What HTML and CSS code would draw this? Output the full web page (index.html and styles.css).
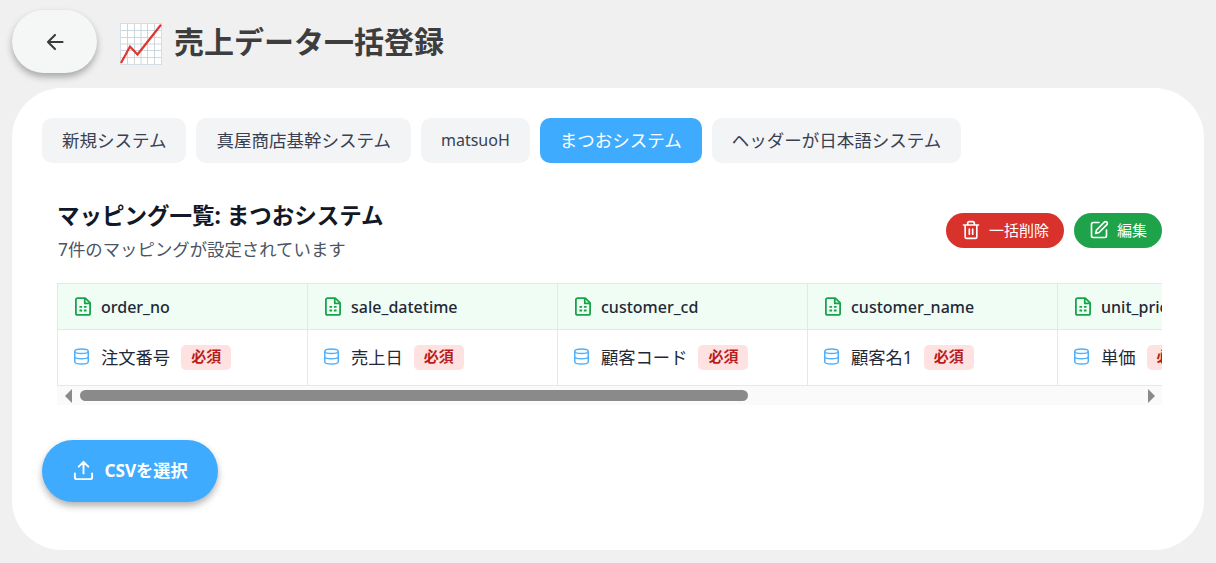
FILE: index.html
```html
<!DOCTYPE html>
<html lang="ja">
<head>
<meta charset="utf-8">
<title>売上データ一括登録</title>
<link rel="stylesheet" href="styles.css">
</head>
<body>
<svg class="defs" width="0" height="0" aria-hidden="true">
  <symbol id="i-file" viewBox="3 1.500 18 21"><path d="M14.500 2.500H6a2 2 0 0 0-2 2v15a2 2 0 0 0 2 2h12a2 2 0 0 0 2-2V8l-5.500-5.500Z" fill="none" stroke="currentColor" stroke-width="2" stroke-linejoin="round"/><path d="M14 3v5.500h6" fill="none" stroke="currentColor" stroke-width="2" stroke-linejoin="round"/><path d="M8 12.500h3M13 12.500h3M8 16.500h3M13 16.500h3" fill="none" stroke="currentColor" stroke-width="2"/></symbol>
  <symbol id="i-db" viewBox="2 1 20 22"><ellipse cx="12" cy="5" rx="9" ry="3" fill="none" stroke="currentColor" stroke-width="2"/><path d="M3 5v14c0 1.660 4 3 9 3s9-1.340 9-3V5M3 12c0 1.660 4 3 9 3s9-1.340 9-3" fill="none" stroke="currentColor" stroke-width="2"/></symbol>
</svg>

<header class="top">
  <button class="back" type="button" aria-label="戻る">
    <svg width="26" height="26" viewBox="0 0 24 24" fill="none" stroke="#3a3a3a" stroke-width="1.900" stroke-linecap="round" stroke-linejoin="round"><path d="M19 12H5.500M12 5.500 5.500 12l6.500 6.500"/></svg>
  </button>
  <svg class="chart" width="42" height="42" viewBox="0 0 42 42">
    <rect x="0.500" y="0.500" width="41" height="41" fill="#fff" stroke="#d5dde5"/>
    <path d="M7.500 1v40M14.500 1v40M21 1v40M27.500 1v40M34.500 1v40M1 7.500h40M1 14.500h40M1 21h40M1 27.500h40M1 34.500h40" stroke="#ccd6dd" stroke-width="1" fill="none"/>
    <path d="M1 40 10 23.500l7.500 8L41 1.700" fill="none" stroke="#e0352f" stroke-width="2.200"/>
  </svg>
  <h1 class="page-title">売上データ一括登録</h1>
</header>

<main class="card">
  <nav class="tabs">
    <button class="tab" type="button">新規システム</button>
    <button class="tab" type="button">真屋商店基幹システム</button>
    <button class="tab tab-latin" type="button">matsuoH</button>
    <button class="tab tab-active" type="button">まつおシステム</button>
    <button class="tab" type="button">ヘッダーが日本語システム</button>
  </nav>

  <section class="mapping">
    <div class="mapping-head">
      <div>
        <h2 class="mapping-title">マッピング一覧: まつおシステム</h2>
        <p class="mapping-sub">7件のマッピングが設定されています</p>
      </div>
      <div class="actions">
        <button class="pill pill-red" type="button">
          <svg width="20" height="20" viewBox="0 0 24 24" fill="none" stroke="currentColor" stroke-width="2" stroke-linecap="round" stroke-linejoin="round"><path d="M3 6h18M19 6v14a2 2 0 0 1-2 2H7a2 2 0 0 1-2-2V6M8 6V4a2 2 0 0 1 2-2h4a2 2 0 0 1 2 2v2M10 11v6M14 11v6"/></svg>
          一括削除
        </button>
        <button class="pill pill-green" type="button">
          <svg width="20" height="20" viewBox="0 0 24 24" fill="none" stroke="currentColor" stroke-width="2" stroke-linecap="round" stroke-linejoin="round"><path d="M12 3H5a2 2 0 0 0-2 2v14a2 2 0 0 0 2 2h14a2 2 0 0 0 2-2v-7"/><path d="M18.400 2.600a2.120 2.120 0 0 1 3 3L12 15l-4 1 1-4 9.400-9.400Z"/></svg>
          編集
        </button>
      </div>
    </div>

    <div class="table-clip">
      <div class="table">
        <div class="col">
          <div class="cell-head"><svg class="ico-file"><use href="#i-file"/></svg>order_no</div>
          <div class="cell-body"><svg class="ico-db"><use href="#i-db"/></svg>注文番号<span class="req">必須</span></div>
        </div>
        <div class="col">
          <div class="cell-head"><svg class="ico-file"><use href="#i-file"/></svg>sale_datetime</div>
          <div class="cell-body"><svg class="ico-db"><use href="#i-db"/></svg>売上日<span class="req">必須</span></div>
        </div>
        <div class="col">
          <div class="cell-head"><svg class="ico-file"><use href="#i-file"/></svg>customer_cd</div>
          <div class="cell-body"><svg class="ico-db"><use href="#i-db"/></svg>顧客コード<span class="req">必須</span></div>
        </div>
        <div class="col">
          <div class="cell-head"><svg class="ico-file"><use href="#i-file"/></svg>customer_name</div>
          <div class="cell-body"><svg class="ico-db"><use href="#i-db"/></svg>顧客名1<span class="req">必須</span></div>
        </div>
        <div class="col">
          <div class="cell-head"><svg class="ico-file"><use href="#i-file"/></svg>unit_price</div>
          <div class="cell-body"><svg class="ico-db"><use href="#i-db"/></svg>単価<span class="req">必須</span></div>
        </div>
      </div>
      <div class="scrollbar">
        <span class="arrow arrow-left"></span>
        <span class="thumb"></span>
        <span class="arrow arrow-right"></span>
      </div>
    </div>
  </section>

  <button class="upload" type="button">
    <svg class="upload-icon" width="23" height="23" viewBox="0 0 24 24" fill="none" stroke="currentColor" stroke-width="2" stroke-linecap="round" stroke-linejoin="round"><path d="M21 15v4a2 2 0 0 1-2 2H5a2 2 0 0 1-2-2v-4M17 8l-5-5-5 5M12 3v12"/></svg>
    CSVを選択
  </button>
</main>
</body>
</html>
```

FILE: styles.css
```css
* { box-sizing: border-box; }
html, body { margin: 0; height: 100%; }
body {
  background: #f0f0f0;
  font-family: "Noto Sans", "Noto Sans CJK JP", sans-serif;
  color: #111827;
  overflow: hidden;
  padding: 10px 12px 0;
}
button { font-family: inherit; border: 0; cursor: pointer; }
.defs { display: block; height: 0; }

.top { display: flex; align-items: center; height: 63px; margin-bottom: 15px; }
.back {
  width: 85px; height: 63px; border-radius: 32px; background: #f5f6f6;
  display: flex; align-items: center; justify-content: center;
  box-shadow: 0 4px 7px rgba(0,0,0,.3);
}
.chart { margin: 4px 12px 0 23px; }
.page-title { margin: 0; font-size: 30px; font-weight: 700; color: #3d3d3d; line-height: 1; }

.card {
  width: 1192px; height: 462px; background: #fff; border-radius: 50px;
  padding: 30px;
}
.tabs { display: flex; gap: 10px; }
.tab {
  height: 45px; padding: 0 20px 2px; border-radius: 10px;
  background: #f3f4f6; color: #374151; font-size: 17.500px;
}
.tab-latin { font-size: 16px; }
.tab-active { background: #3eabff; color: #fff; }

.mapping { padding: 0 12px 0 15px; margin-top: 38px; }
.mapping-head { display: flex; justify-content: space-between; align-items: flex-start; }
.mapping-title { margin: 0; font-size: 22.500px; line-height: 30px; font-weight: 700; color: #111827; }
.mapping-sub { margin: 7px 0 0; padding-left: 1px; font-size: 17.400px; line-height: 23px; color: #4b5563; }
.actions { display: flex; gap: 10px; margin-top: 12px; }
.pill {
  height: 35px; padding: 0 15px 2px; border-radius: 18px; color: #fff; font-size: 15px;
  display: flex; align-items: center; gap: 8px;
}
.pill-red { background: #d9312b; }
.pill-green { background: #1fa34a; }

.table-clip { width: 1105px; margin-top: 22px; overflow: hidden; }
.table { display: flex; border: solid #e5e7eb; border-width: 1px 0; width: 1400px; }
.col { width: 250px; flex: none; border-left: 1px solid #e5e7eb; }
.cell-head {
  height: 46px; padding: 0 17px; background: #f0fdf4; border-bottom: 1px solid #e5e7eb;
  display: flex; align-items: center; gap: 10px; font-size: 16px; font-weight: 500; color: #1f2937;
}
.cell-body {
  height: 55px; padding: 0 16px 2px; display: flex; align-items: center; font-size: 17.300px; color: #1f2937;
  gap: 11px;
}
.ico-file { width: 16px; height: 19px; color: #16a34a; flex: none; }
.ico-db { width: 15px; height: 17px; color: #52b1fb; flex: none; margin-right: 1px; }
.req {
  background: #fee2e2; color: #b91c1c; font-size: 15px; font-weight: 700;
  margin-top: 2px; padding: 0 10px; height: 25px; line-height: 22px; border-radius: 5px;
}
.scrollbar {
  height: 19px; background: #fafafa; display: flex; align-items: center;
  padding: 0 7px 0 8px;
}
.arrow { width: 0; height: 0; border: solid transparent; border-width: 7px 0; flex: none; }
.arrow-left { border-right: 7px solid #8a8a8a; }
.arrow-right { border-left: 7px solid #8a8a8a; margin-left: auto; }
.thumb { width: 668px; height: 11px; border-radius: 6px; background: #8a8a8a; margin-left: 8px; }

.upload {
  margin-top: 35px; width: 176px; height: 62px; border-radius: 31px; padding: 0 0 4px;
  background: #3eabff; color: #fff; font-size: 17.200px; font-weight: 700;
  display: flex; align-items: center; justify-content: center; gap: 9px;
  box-shadow: 0 4px 7px rgba(0,0,0,.3);
}
.upload-icon { margin-top: 2px; }
```
